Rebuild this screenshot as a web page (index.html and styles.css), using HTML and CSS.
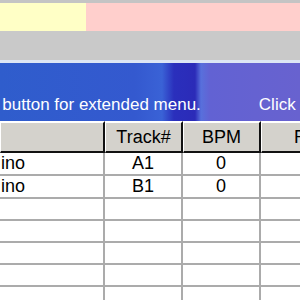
FILE: index.html
```html
<!DOCTYPE html>
<html lang="en">
<head>
    <meta charset="UTF-8">
    <meta name="viewport" content="width=device-width, initial-scale=1.0">
    <title>Track List</title>
    <link rel="stylesheet" href="styles.css">
</head>
<body>
    <div class="top-strip"></div>
    <div class="color-bar">
        <div class="swatch-yellow"></div>
        <div class="swatch-pink"></div>
    </div>
    <div class="toolbar"></div>

    <div class="banner">
        <span class="hint">the button for extended menu.</span>
        <span class="hint hint-next">Click the button</span>
    </div>

    <table class="grid">
        <thead>
            <tr>
                <th class="col-title"></th>
                <th class="col-track">Track#</th>
                <th class="col-bpm">BPM</th>
                <th class="col-rating">Rating</th>
            </tr>
        </thead>
        <tbody>
            <tr>
                <td class="title">ino</td>
                <td>A1</td>
                <td>0</td>
                <td></td>
            </tr>
            <tr>
                <td class="title">ino</td>
                <td>B1</td>
                <td>0</td>
                <td></td>
            </tr>
            <tr><td></td><td></td><td></td><td></td></tr>
            <tr><td></td><td></td><td></td><td></td></tr>
            <tr><td></td><td></td><td></td><td></td></tr>
            <tr><td></td><td></td><td></td><td></td></tr>
            <tr><td></td><td></td><td></td><td></td></tr>
        </tbody>
    </table>
</body>
</html>
```

FILE: styles.css
```css
/* Liste des pistes */
body {
    margin: 0;
    width: 300px;
    height: 300px;
    overflow: hidden;
    background-color: #fff;
    font-family: "Liberation Sans", Arial, sans-serif;
}

.top-strip {
    height: 3px;
    background-color: #c4c4c4;
}

.color-bar {
    display: flex;
    height: 28px;
}

.swatch-yellow {
    width: 86px;
    background-color: #ffffc6;
}

.swatch-pink {
    flex: 1;
    background-color: #ffcfcc;
}

.toolbar {
    height: 29px;
    background-color: #c9c9c9;
}

.banner {
    height: 61px;
    border-top: 3px solid #dde6f4;
    display: flex;
    align-items: flex-end;
    box-sizing: border-box;
    white-space: nowrap;
    overflow: hidden;
    background: linear-gradient(90deg, #2f5dcc 0%, #3459cf 45%, #3a62d6 54%, #2a2fbc 58%, #2b2bb8 65%, #5870dc 67%, #6262d3 70%, #6862cf 100%);
}

.hint {
    color: #fff;
    font-size: 17px;
    line-height: 20px;
    margin-bottom: 6px;
}

.hint:first-child {
    margin-left: -26px;
}

.hint-next {
    margin-left: 58px;
}

.grid {
    border-collapse: separate;
    border-spacing: 0;
    table-layout: fixed;
    width: 380px;
    font-size: 18px;
}

.grid th {
    height: 28px;
    padding: 0;
    background-color: #d4d2cc;
    border-top: 2px solid #fff;
    border-left: 1px solid #fff;
    border-right: 2px solid #111;
    border-bottom: 2px solid #111;
    font-weight: normal;
    color: #000;
    text-align: center;
}

.col-title {
    width: 102px;
}

.col-track,
.col-bpm {
    width: 75px;
}

.grid th.col-rating {
    text-align: left;
    padding-left: 32px;
}

.grid td {
    height: 20px;
    padding: 0;
    border-right: 2px solid #ababab;
    border-bottom: 2px solid #ababab;
    text-align: center;
    color: #000;
}

.grid td.title {
    text-align: left;
    padding-left: 1px;
}
```
